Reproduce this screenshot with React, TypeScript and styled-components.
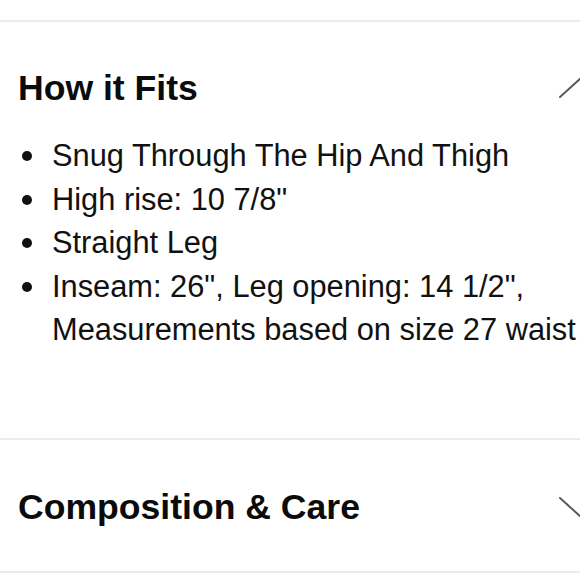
import React from 'react';
import styled, {createGlobalStyle} from 'styled-components';

const GlobalStyle = createGlobalStyle`
  html, body {
    margin: 0;
    padding: 0;
    background: #fff;
    overflow: hidden;
  }
  body {
    font-family: "Liberation Sans", Arial, sans-serif;
    color: #111;
  }
`;

const Page = styled.div`
  width: 604px;
  padding-top: 20px;
`;

const Section = styled.section<{$open?: boolean}>`
  border-top: 2px solid #ececec;
  padding: ${p => (p.$open ? '46px 0 86px' : '47px 0 44px')};
  &:last-child {
    border-bottom: 2px solid #ececec;
  }
`;

const Header = styled.div`
  display: flex;
  align-items: center;
  justify-content: space-between;
  padding-left: 18px;
  height: 40px;
`;

const Title = styled.h2`
  margin: 0;
  font-size: 35.6px;
  line-height: 40px;
  font-weight: 700;
  color: #0b0b0b;
`;

const Chevron = styled.svg`
  width: 46px;
  height: 24px;
  flex: none;
`;

const List = styled.ul`
  list-style: none;
  margin: 26px 0 0;
  padding: 0 0 0 19px;
`;

const Item = styled.li`
  display: grid;
  grid-template-columns: 33px 1fr;
  align-items: start;
  font-size: 30.8px;
  line-height: 43.5px;
  padding-right: 4px;
`;

const Dot = styled.span`
  width: 10px;
  height: 10px;
  border-radius: 50%;
  background: #111;
  margin: 17px 0 0 3px;
`;

const ChevronIcon: React.FC<{up?: boolean}> = ({up}) => (
  <Chevron viewBox="0 0 46 24">
    <polyline
      points={up ? '2,21 23,2 44,21' : '2,3 23,22 44,3'}
      fill="none"
      stroke="#5a5a5a"
      strokeWidth="2"
      strokeLinecap="round"
      strokeLinejoin="round"
    />
  </Chevron>
);

const fits = [
  'Snug Through The Hip And Thigh',
  'High rise: 10 7/8"',
  'Straight Leg',
  'Inseam: 26", Leg opening: 14 1/2", Measurements based on size 27 waist',
];

const App: React.FC = () => {
  return (
    <Page>
      <GlobalStyle />
      <Section $open>
        <Header>
          <Title>How it Fits</Title>
          <ChevronIcon up />
        </Header>
        <List>
          {fits.map(f => (
            <Item key={f}>
              <Dot />
              <span>{f}</span>
            </Item>
          ))}
        </List>
      </Section>
      <Section>
        <Header>
          <Title>Composition &amp; Care</Title>
          <ChevronIcon />
        </Header>
      </Section>
    </Page>
  );
};

export default App;
